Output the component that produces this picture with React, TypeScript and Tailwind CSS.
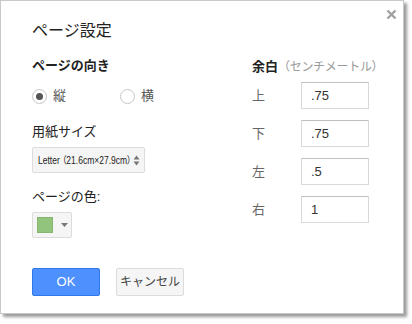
import React from "react";

const font = "font-['Liberation_Sans','Noto_Sans_CJK_JP',sans-serif]";

const Radio = ({ checked, label }: { checked?: boolean; label: string }) => (
  <label className="flex items-center gap-[6px]">
    <span className="flex size-[15px] items-center justify-center rounded-full border border-[#c6c6c6] bg-white">
      {checked && <span className="size-[7px] rounded-full bg-[#555]" />}
    </span>
    <span className="text-[13px] leading-[16px] text-[#555]">{label}</span>
  </label>
);

const MarginRow = ({ label, value }: { label: string; value: string }) => (
  <div className="flex h-[27px] items-center">
    <span className="w-[49px] text-[13px] text-[#666]">{label}</span>
    <div className="flex h-[27px] w-[68px] items-center border border-[#d9d9d9] border-t-[#c0c0c0] pl-[9px] text-[13px] text-[#333]">
      {value}
    </div>
  </div>
);

export default function App() {
  return (
    <div className={`${font} h-[324px] w-[412px] bg-white`}>
      <div className="flex h-[314px] w-[404px] flex-col border border-[#c9c9c9] bg-white shadow-[3px_3px_3px_rgba(0,0,0,0.4)]">
        <div className="flex items-start justify-between pl-[31px] pr-[6px] pt-[7px]">
          <div className="mt-[13px] text-[16px] leading-[20px] text-[#222]">ページ設定</div>
          <svg width="11" height="11" viewBox="0 0 11 11" className="mt-[1px]">
            <path d="M1.5 1.5 L9.5 9.5 M9.5 1.5 L1.5 9.5" stroke="#a0a0a0" strokeWidth="2.4" />
          </svg>
        </div>

        <div className="mt-[17px] flex pl-[31px]">
          <div className="flex w-[220px] flex-col">
            <div className="text-[13px] font-bold leading-[16px] text-[#222]">ページの向き</div>
            <div className="mt-[14px] flex h-[16px] items-center">
              <div className="w-[88px]">
                <Radio checked label="縦" />
              </div>
              <Radio label="横" />
            </div>
            <div className="mt-[20px] text-[13px] leading-[16px] text-[#222]">用紙サイズ</div>
            <div className="mt-[7px] flex h-[26px] w-[113px] items-center rounded-[2px] border border-[#dcdcdc] bg-[#f5f5f5] pl-[5px]">
              <span className="w-[91px] shrink-0 origin-left scale-x-[0.85] whitespace-nowrap text-[10px] text-[#222] [font-feature-settings:'palt']">
                Letter （21.6cm×27.9cm）
              </span>
              <svg width="7" height="11" viewBox="0 0 7 11" className="ml-[4px] shrink-0">
                <path d="M3.5 0.5 L6.5 4.5 L0.5 4.5 Z M0.5 6.5 L6.5 6.5 L3.5 10.5 Z" fill="#777" />
              </svg>
            </div>
            <div className="mt-[16px] text-[13px] leading-[16px] text-[#222]">ページの色:</div>
            <div className="mt-[7px] flex h-[26px] w-[40px] items-center rounded-[2px] border border-[#dcdcdc] bg-[#f5f5f5] pl-[4px]">
              <span className="size-[16px] border border-[#86b56f] bg-[#93c47d]" />
              <svg width="7" height="4" viewBox="0 0 7 4" className="ml-[8px]">
                <path d="M0 0 L7 0 L3.5 4 Z" fill="#777" />
              </svg>
            </div>
          </div>

          <div className="flex flex-col">
            <div className="whitespace-nowrap leading-[16px]">
              <span className="text-[13px] font-bold text-[#222]">余白</span>
              <span className="text-[12px] tracking-[-0.3px] text-[#999]">（センチメートル）</span>
            </div>
            <div className="mt-[7px] flex flex-col gap-[11px]">
              <MarginRow label="上" value=".75" />
              <MarginRow label="下" value=".75" />
              <MarginRow label="左" value=".5" />
              <MarginRow label="右" value="1" />
            </div>
          </div>
        </div>

        <div className="mt-[30px] flex gap-[16px] pl-[31px]">
          <button className="h-[28px] w-[68px] rounded-[2px] border border-[#3079ed] bg-[#4d90fe] text-[13px] text-white">
            OK
          </button>
          <button className="h-[28px] w-[68px] rounded-[2px] border border-[#dcdcdc] bg-[#f5f5f5] text-[12px] text-[#444]">
            キャンセル
          </button>
        </div>
      </div>
    </div>
  );
}
